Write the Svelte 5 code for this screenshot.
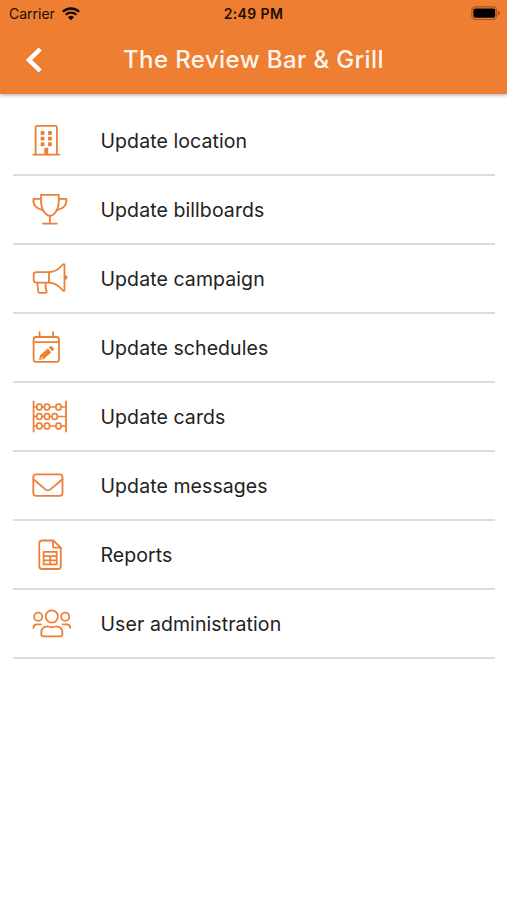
<script lang="ts">
  type IconName =
    | 'building'
    | 'trophy'
    | 'megaphone'
    | 'calendar'
    | 'abacus'
    | 'envelope'
    | 'report'
    | 'users';

  interface MenuItem {
    icon: IconName;
    label: string;
  }

  const items: MenuItem[] = [
    { icon: 'building', label: 'Update location' },
    { icon: 'trophy', label: 'Update billboards' },
    { icon: 'megaphone', label: 'Update campaign' },
    { icon: 'calendar', label: 'Update schedules' },
    { icon: 'abacus', label: 'Update cards' },
    { icon: 'envelope', label: 'Update messages' },
    { icon: 'report', label: 'Reports' },
    { icon: 'users', label: 'User administration' },
  ];

  // bead centres on each abacus wire
  const beads = [
    [19.3, 27, 38.5],
    [19.3, 27, 34.7],
    [19.3, 27, 38.5],
  ];
</script>

<div class="screen">
  <header>
    <div class="status">
      <div class="carrier">
        <span>Carrier</span>
        <svg class="wifi" width="18" height="14" viewBox="0 0 18 14">
          <path d="M0.9 4.8 A11.6 11.6 0 0 1 17.1 4.8" />
          <path d="M3.7 7.7 A7.6 7.6 0 0 1 14.3 7.7" />
          <path class="dot" d="M6 10.2 A4.3 4.3 0 0 1 12 10.2 L9 13.3 Z" />
        </svg>
      </div>
      <span class="time">2:49 PM</span>
      <svg class="battery" width="30" height="15" viewBox="0 0 30 15">
        <rect class="shell" x="0.9" y="0.9" width="24.6" height="12.6" rx="3.6" />
        <rect x="2.4" y="2.6" width="21.8" height="9.2" rx="2" />
        <path class="cap" d="M27 5 Q29 5.5 29 7.2 Q29 8.9 27 9.4 Z" />
      </svg>
    </div>
    <nav>
      <button aria-label="Back">
        <svg width="18" height="26" viewBox="0 0 18 26">
          <path d="M15.2 2.2 L4 13 L15.2 23.8" />
        </svg>
      </button>
      <h1>The Review Bar &amp; Grill</h1>
    </nav>
  </header>

  <ul>
    {#each items as item (item.icon)}
      <li>
        <svg class="icon" width="60" height="50" viewBox="0 0 60 50">
          {#if item.icon === 'building'}
            <path d="M15.6 39.3 V12.3 Q15.6 10.8 17.1 10.8 H35.4 Q36.9 10.8 36.9 12.3 V39.3" />
            <path d="M13.2 39.7 H39.5" />
            <g class="solid">
              {#each [16, 21.7, 27.3] as y}
                <rect x="20.6" {y} width="3.9" height="3.9" rx="0.8" />
                <rect x="28" {y} width="3.9" height="3.9" rx="0.8" />
              {/each}
              <rect x="24.3" y="32.8" width="3.9" height="7" rx="0.8" />
            </g>
          {:else if item.icon === 'trophy'}
            <path d="M21 10.8 H38.7 Q39.8 28 31.8 31.3 Q29.9 32 28 31.3 Q20 28 21 10.8 Z" />
            <path d="M21 14.9 H13.5 Q12.5 24 23.3 26.2 M38.8 14.9 H46.3 Q47.3 24 36.5 26.2" />
            <path d="M29.9 32 V39.6 M23 39.6 H36.8" />
          {:else if item.icon === 'megaphone'}
            <path d="M29 19.2 H16.5 Q13.7 19.2 13.7 22 V26.8 Q13.7 29.6 16.5 29.6 H29 M29 19.2 V29.6" />
            <path d="M29 19.2 C34.5 19 39 16 42.4 12 Q44.5 10 44.5 12.5 V36.5 Q44.5 39 42.4 37 C39 33 34.5 29.8 29 29.6" />
            <path d="M17.2 29.8 L18.3 38.5 Q18.5 39.8 19.8 39.8 H25.5 Q27 39.8 26.6 38.5 Q25 34.5 25.8 29.8" />
            <path class="solid" d="M44.8 21.8 Q47.6 22.5 47.6 24.4 Q47.6 26.3 44.8 27 Z" />
          {:else if item.icon === 'calendar'}
            <rect x="13.6" y="15" width="25.4" height="24.8" rx="2.4" />
            <path d="M13.6 20.2 H39 M19.6 10.2 V15 M33.1 10.2 V15" />
            <g class="solid">
              <path d="M19 38 L20.1 33.3 L27.8 26.5 L31.4 30.2 L23.8 37 Z" />
              <path d="M28.8 25.5 L30.4 24.2 Q31.2 23.7 32 24.4 L33.7 26.2 Q34.3 27 33.7 27.8 L32.3 29.2 Z" />
            </g>
            <path class="gap" d="M21.2 36.6 L22.3 35.4" />
          {:else if item.icon === 'abacus'}
            <path d="M13.6 10.5 V40.5 M46 10.5 V40.5" />
            {#each beads as row, i}
              {@const y = 16 + i * 9.5}
              <path class="thin" d="M13.6 {y} H46" />
              {#each row as x}
                <rect class="bead" x={x - 2.5} y={y - 2.9} width="5" height="5.8" rx="2.2" />
              {/each}
            {/each}
          {:else if item.icon === 'envelope'}
            <rect x="13.3" y="14.3" width="29.2" height="21.6" rx="2.8" />
            <path d="M13.5 19.2 L25.6 29.6 Q27.9 31.3 30.2 29.6 L42.4 19.2" />
          {:else if item.icon === 'report'}
            <path d="M33.2 11.5 H22.2 Q19.3 11.5 19.3 14.3 V37.2 Q19.3 40 22.2 40 H38 Q40.8 40 40.8 37.2 V18.7 Z" />
            <path d="M33 11.8 V17 Q33 18.7 34.7 18.7 H40.5" />
            <path d="M23.6 22.8 H36.7 V35.4 H23.6 Z M23.6 27.1 H36.7 M23.6 31.4 H36.7 M30.2 27.1 V35.4" />
          {:else}
            <circle cx="31.8" cy="18.5" r="6.1" />
            <circle cx="18.2" cy="18.7" r="4.1" />
            <circle cx="45.2" cy="18.7" r="4.1" />
            <path d="M21.3 36.3 V34.8 Q21.3 28.4 27.6 28.3 Q31.8 30.2 36 28.3 Q42.4 28.4 42.4 34.8 V36.3 Q42.4 38.3 40.3 38.3 H23.4 Q21.3 38.3 21.3 36.3 Z" />
            <path d="M13.3 29.8 Q13.7 26.4 17 26.4 H20.9 M50.3 29.8 Q49.9 26.4 46.6 26.4 H42.7" />
          {/if}
        </svg>
        <span class="label">{item.label}</span>
      </li>
    {/each}
  </ul>
</div>

<style>
  :global(body) {
    margin: 0;
    background: #fff;
  }
  .screen {
    height: 900px;
    overflow: hidden;
    background: #fff;
    font-family: Inter, 'Liberation Sans', sans-serif;
  }
  header {
    height: 94px;
    background: #ee7e32;
    box-shadow: 0 1px 4px rgba(0, 0, 0, 0.35);
  }
  .status {
    display: grid;
    grid-template-columns: 1fr auto 1fr;
    align-items: center;
    height: 27px;
    padding: 0 6px 0 9px;
    color: #1c0d03;
    font-size: 14px;
    line-height: 27px;
  }
  .carrier {
    display: flex;
    align-items: center;
    gap: 7px;
  }
  .time {
    margin-right: 3px;
    font-weight: 600;
    letter-spacing: 0.4px;
  }
  .wifi {
    fill: none;
    stroke: #100602;
    stroke-width: 2.3;
  }
  .wifi .dot {
    fill: #100602;
    stroke: none;
  }
  .battery {
    justify-self: end;
    fill: #000;
  }
  .battery .shell {
    fill: none;
    stroke: #a3541e;
    stroke-width: 1.2;
  }
  .battery .cap {
    fill: #a3541e;
  }
  nav {
    display: grid;
    grid-template-columns: 60px 1fr 60px;
    align-items: center;
    height: 66px;
  }
  button {
    display: flex;
    margin: 0;
    padding: 0 0 0 25px;
    border: 0;
    background: none;
  }
  button svg {
    fill: none;
    stroke: #fff;
    stroke-width: 4.4;
  }
  h1 {
    margin: 0 0 2px;
    color: #fff5ec;
    font-size: 24px;
    font-weight: 500;
    letter-spacing: 0.4px;
    text-align: center;
    white-space: nowrap;
  }
  ul {
    margin: 0;
    padding: 13px 12px 0 13px;
    list-style: none;
  }
  li {
    display: flex;
    align-items: center;
    box-sizing: border-box;
    height: 69px;
    padding-left: 7px;
    border-bottom: 2px solid #dcdcdc;
  }
  .icon {
    flex-shrink: 0;
    margin-bottom: 1px;
    fill: none;
    stroke: #ec8039;
    stroke-width: 1.8;
    stroke-linecap: round;
    stroke-linejoin: round;
  }
  .icon .solid {
    fill: #ec8039;
    stroke: none;
  }
  .icon .thin {
    stroke-width: 1.5;
  }
  .icon .bead {
    fill: #fff;
    stroke-width: 1.7;
  }
  .icon .gap {
    stroke: #fff;
    stroke-width: 1;
  }
  .label {
    margin-left: 20px;
    padding-left: 0.5px;
    color: #222;
    font-size: 19.5px;
    letter-spacing: 0.08px;
    white-space: nowrap;
  }
</style>
